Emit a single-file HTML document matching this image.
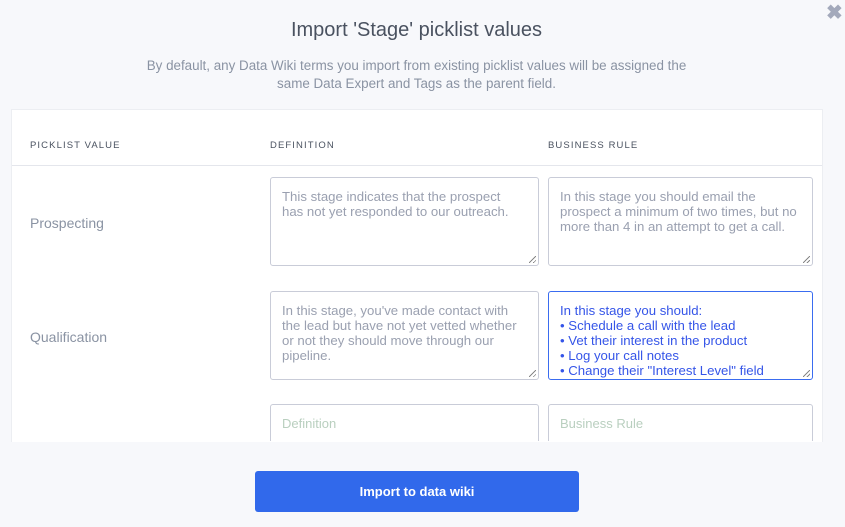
<!DOCTYPE html>
<html><head><style>
body{margin:0;width:845px;height:527px;background:#f7f8fb;font-family:"Liberation Sans",sans-serif;position:relative;overflow:hidden}
.abs{position:absolute}
h1{position:absolute;top:19px;left:0;width:833px;text-align:center;margin:0;font-weight:normal;font-size:20px;color:#4a5260}
.sub{top:57px;left:0;width:833px;text-align:center;font-size:13.4px;line-height:18px;color:#8a93a3}
.panel{left:11px;top:109px;width:810px;height:332px;background:#fff;border:1px solid #eceef2;border-bottom:none;overflow:hidden}
.hd{font-size:9.5px;letter-spacing:1.1px;color:#4a5260;top:140px}
.line{left:12px;top:165px;width:810px;height:1px;background:#e4e6ec}
.lab{font-size:14px;color:#8a93a3;left:30px}
.ta{border:1px solid #c9ccd8;border-radius:3px;background:#fff;box-sizing:border-box;padding:11px 16px 11px 11px;font-size:13.2px;line-height:15px;color:#9aa0b0}
.ta.f{border-color:#3a6cf0;color:#3555e8}
.ph{color:#b9cfbf;font-size:13px;padding-top:11px}
.grip{position:absolute;right:2px;bottom:2px;width:7px;height:7px;background:linear-gradient(135deg,transparent 45%,#888 45%,#888 55%,transparent 55%,transparent 75%,#888 75%,#888 85%,transparent 85%)}
.btn{left:255px;top:471px;width:324px;height:41px;background:#3169eb;border-radius:3px;color:#fff;font-size:13px;font-weight:bold;text-align:center;line-height:41px}
</style></head><body>
<h1>Import 'Stage' picklist values</h1>
<div class="abs sub">By default, any Data Wiki terms you import from existing picklist values will be assigned the<br>same Data Expert and Tags as the parent field.</div>
<div class="abs" style="left:826px;top:0px;font-size:20px;font-weight:bold;color:#a3a9bb">✖</div>
<div class="abs panel"></div>
<div class="abs hd" style="left:30px">PICKLIST VALUE</div>
<div class="abs hd" style="left:270px">DEFINITION</div>
<div class="abs hd" style="left:548px">BUSINESS RULE</div>
<div class="abs line"></div>
<div class="abs lab" style="top:215px">Prospecting</div>
<div class="abs lab" style="top:329px">Qualification</div>
<div class="abs ta" style="left:270px;top:177px;width:269px;height:89px">This stage indicates that the prospect has not yet responded to our outreach.<div class="grip"></div></div>
<div class="abs ta" style="left:548px;top:177px;width:265px;height:89px;padding-right:8px">In this stage you should email the prospect a minimum of two times, but no more than 4 in an attempt to get a call.<div class="grip"></div></div>
<div class="abs ta" style="left:270px;top:291px;width:269px;height:89px">In this stage, you've made contact with the lead but have not yet vetted whether or not they should move through our pipeline.<div class="grip"></div></div>
<div class="abs ta f" style="left:548px;top:291px;width:265px;height:89px">In this stage you should:<br>• Schedule a call with the lead<br>• Vet their interest in the product<br>• Log your call notes<br>• Change their "Interest Level" field<div class="grip"></div></div>
<div class="abs" style="left:0;top:404px;width:845px;height:37px;overflow:hidden">
<div class="abs ta ph" style="left:270px;top:0;width:269px;height:60px">Definition</div>
<div class="abs ta ph" style="left:548px;top:0;width:265px;height:60px">Business Rule</div>
</div>
<div class="abs btn">Import to data wiki</div>
</body></html>
